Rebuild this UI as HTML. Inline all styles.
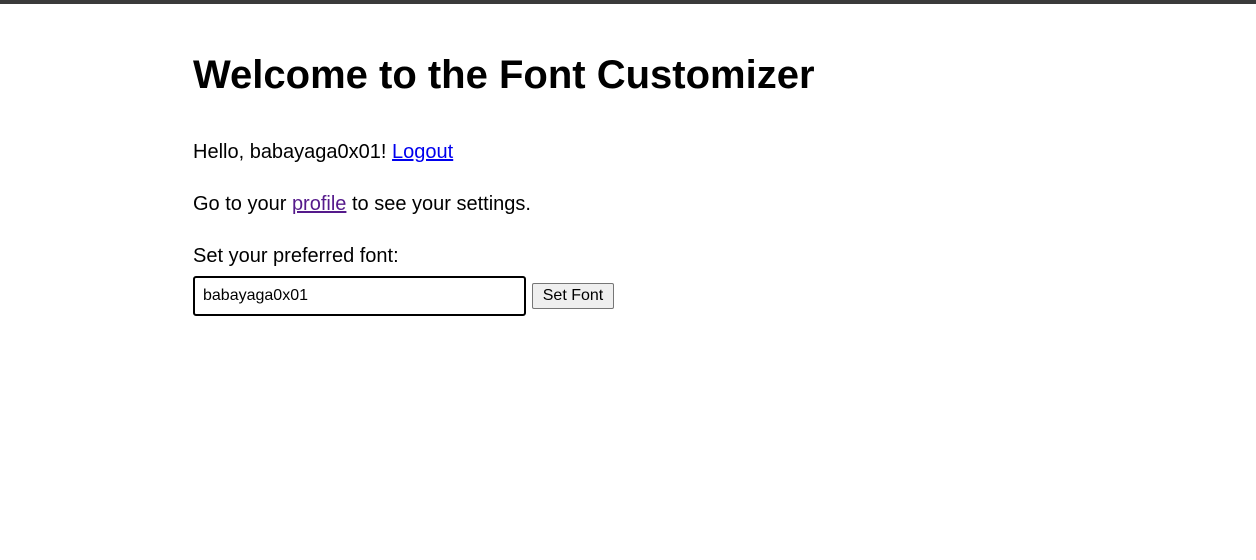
<!DOCTYPE html>
<html><head><style>
body{margin:0;background:#fff;font-family:"Liberation Sans",Arial,sans-serif;color:#000;width:1256px;height:560px;overflow:hidden;position:relative}
.bar{position:absolute;left:0;top:0;width:1256px;height:4px;background:#3a3a3a}
.t{position:absolute;left:193px;white-space:nowrap}
h1{margin:0;font-size:40px;font-weight:bold}
.p{font-size:20px;line-height:24px}
a{text-decoration:underline}
.in{position:absolute;left:193px;top:276px;width:329px;height:36px;border:2px solid #000;border-radius:3px;box-sizing:content-box}
.in span{position:absolute;left:8px;top:9px;font-size:16px}
.btn{position:absolute;left:532px;top:283px;width:80px;height:24px;border:1px solid #767676;background:#efefef;border-radius:2px;font-size:16px;text-align:center;line-height:24px}
</style></head><body>
<div class="bar"></div>
<h1 class="t" style="top:53px">Welcome to the Font Customizer</h1>
<div class="t p" style="top:140px">Hello, babayaga0x01! <a style="color:#0000ee">Logout</a></div>
<div class="t p" style="top:192px">Go to your <a style="color:#551a8b">profile</a> to see your settings.</div>
<div class="t p" style="top:244px">Set your preferred font:</div>
<div class="in"><span>babayaga0x01</span></div>
<div class="btn">Set Font</div>
</body></html>
